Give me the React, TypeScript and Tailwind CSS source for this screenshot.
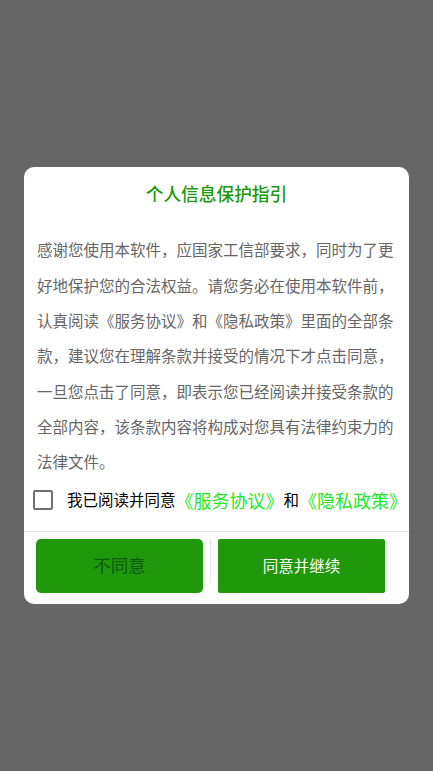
import { useState } from "react";

const FONT = "font-['Noto_Sans_CJK_SC','Noto_Sans',sans-serif]";

export default function App() {
  const [checked, setChecked] = useState(false);

  return (
    <div className={`${FONT} flex min-h-screen w-full items-center justify-center bg-[#666666]`}>
      <div className="flex w-[385px] flex-col rounded-[10px] bg-white">
        {/* title */}
        <h1 className="pt-[14px] text-center text-[17.7px] font-medium leading-6 text-[#1a9a0a]">
          个人信息保护指引
        </h1>

        {/* body */}
        <p className="mt-[27px] pl-[13px] pr-[12px] text-[15.5px] leading-[35.3px] text-[#666666]">
          感谢您使用本软件，应国家工信部要求，同时为了更好地保护您的合法权益。请您务必在使用本软件前，认真阅读《服务协议》和《隐私政策》里面的全部条款，建议您在理解条款并接受的情况下才点击同意，一旦您点击了同意，即表示您已经阅读并接受条款的全部内容，该条款内容将构成对您具有法律约束力的法律文件。
        </p>

        {/* agree checkbox */}
        <div className="flex h-[41px] items-center pl-[9px]">
          <button
            onClick={() => setChecked(!checked)}
            className="h-5 w-5 shrink-0 rounded-[2px] border-2 border-[#707070] bg-white"
          />
          <div className="ml-[14px] flex items-center whitespace-nowrap text-black">
            <span className="text-[15.5px]">我已阅读并同意</span>
            <span className="text-[18px] text-[#1ee81e]">《服务协议》</span>
            <span className="text-[15.5px]">和</span>
            <span className="text-[18px] text-[#1ee81e]">《隐私政策》</span>
          </div>
        </div>

        <div className="mt-[10px] h-px bg-[#e2e2e2]" />

        {/* buttons */}
        <div className="flex pb-[11px] pl-[12px] pt-[7px]">
          <button className="flex h-[54px] w-[167px] items-center justify-center rounded-[5px] bg-[#1f980b] text-[17.5px] text-[#0d5c0d]">
            不同意
          </button>
          <div className="mx-[7px] h-[44px] w-px bg-[#e6e6e6]" />
          <button className="flex h-[54px] w-[167px] items-center justify-center rounded-[2px] bg-[#1f980b] text-[15.5px] text-white">
            同意并继续
          </button>
        </div>
      </div>
    </div>
  );
}
